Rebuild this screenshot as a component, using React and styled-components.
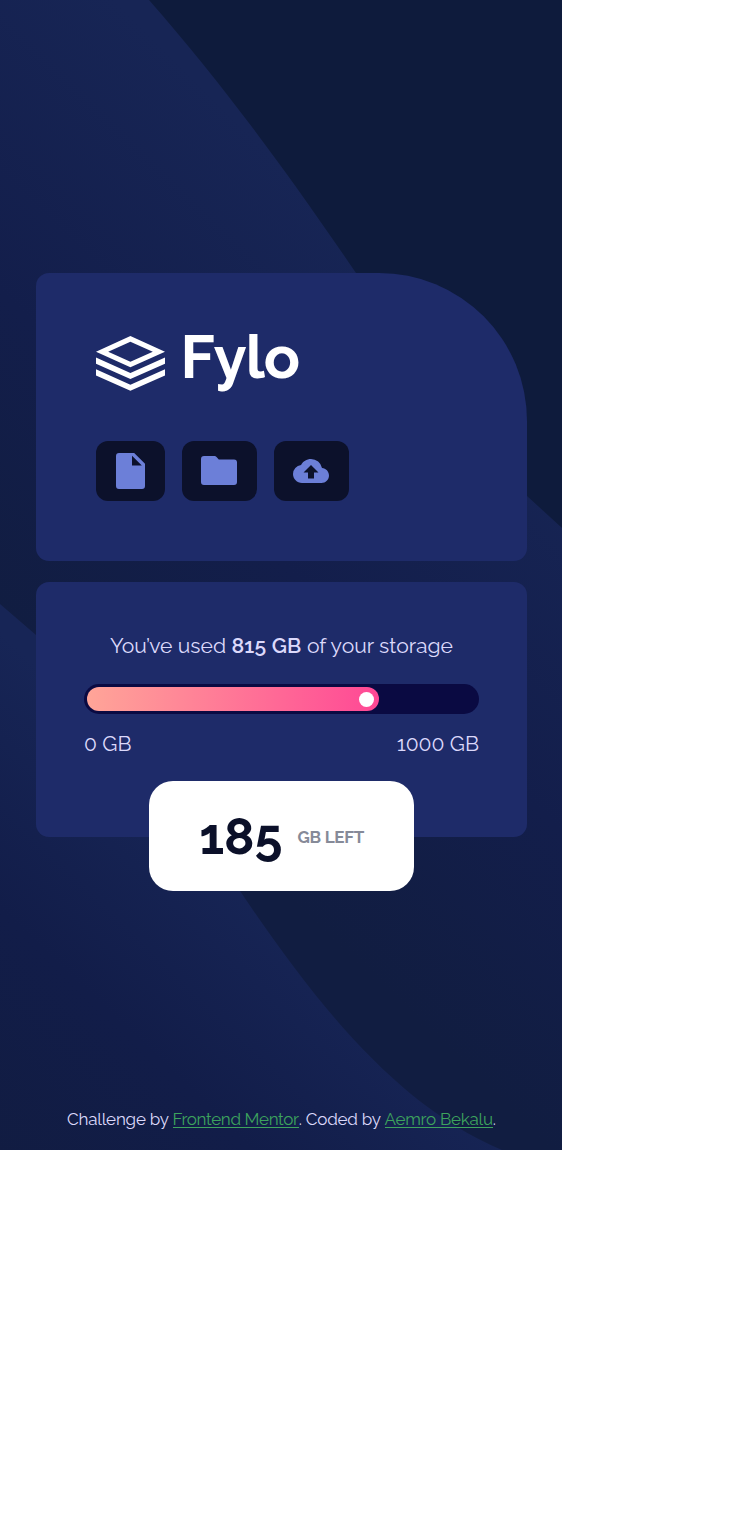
import React from "react";
import styled, { createGlobalStyle } from "styled-components";

const GlobalStyle = createGlobalStyle`
  *, *::before, *::after { box-sizing: border-box; }
  body {
    margin: 0;
    background: #fff;
    font-family: Raleway, Lato, sans-serif;
  }
  p { margin: 0; }
`;

const Page = styled.div`
  position: relative;
  width: 562px;
  height: 1150px;
  padding: 273px 35px 0 36px;
  display: flex;
  flex-direction: column;
  overflow: hidden;
  background: #0e1b3c;
`;

const Backdrop = styled.svg`
  position: absolute;
  inset: 0;
  width: 100%;
  height: 100%;
`;

const Main = styled.main`
  position: relative;
  display: flex;
  flex-direction: column;
  gap: 21px;
`;

const BrandCard = styled.section`
  height: 288px;
  padding: 60px;
  display: flex;
  flex-direction: column;
  justify-content: space-between;
  background: #1e2b69;
  border-radius: 13px 148px 13px 13px;
`;

const LogoSvg = styled.svg`
  display: block;
  width: 220px;
  height: 72px;
  fill: #fff;
  overflow: visible;
`;

const LogoText = styled.text`
  font: 700 60px Raleway, Lato, sans-serif;
  letter-spacing: -0.9px;
`;

const Actions = styled.div`
  display: flex;
  gap: 17px;
`;

const ActionButton = styled.button`
  width: ${(p) => p.$width}px;
  height: 60px;
  padding: ${(p) => p.$inset};
  border: 0;
  border-radius: 12px;
  display: flex;
  align-items: flex-start;
  justify-content: flex-start;
  background: #0c112b;
  color: #6c7fd8;

  svg {
    display: block;
    fill: currentColor;
  }
`;

const StorageCard = styled.section`
  position: relative;
  height: 255px;
  padding: 50px 48px 0;
  background: #1e2b69;
  border-radius: 13px;
  color: #dcd9fb;
  font-size: 21.12px;
  line-height: 28px;
`;

const Usage = styled.p`
  text-align: center;
  white-space: nowrap;

  b {
    font-weight: 650;
    letter-spacing: 0.2px;
  }
`;

const Track = styled.div`
  height: 30px;
  margin: 24px 0 16px;
  padding: 3px;
  border-radius: 15px;
  background: #0a0a42;
`;

const Fill = styled.div`
  height: 24px;
  padding: 1px 5px 0 0;
  border-radius: 12px;
  display: flex;
  align-items: center;
  justify-content: flex-end;
  background: linear-gradient(90deg, #ffa598, #ff4895);
`;

const Knob = styled.span`
  width: 15px;
  height: 15px;
  border-radius: 50%;
  background: #fff;
`;

const Scale = styled.div`
  display: flex;
  justify-content: space-between;
`;

const Remaining = styled.div`
  position: absolute;
  left: 113px;
  bottom: -54px;
  width: 265px;
  height: 110px;
  border-radius: 24px;
  display: flex;
  align-items: center;
  justify-content: center;
  gap: 15px;
  background: #fff;
`;

const Amount = styled.span`
  padding-top: 2px;
  color: #0b1029;
  font-size: 50.5px;
  font-weight: 700;
`;

const Unit = styled.span`
  padding-top: 2px;
  color: #868a98;
  font-size: 17px;
  font-weight: 700;
  letter-spacing: -0.3px;
`;

const Footer = styled.footer`
  position: relative;
  margin-top: 271px;
  display: flex;
  justify-content: center;
  color: #dcd9fb;
  font-size: 17px;
  line-height: 22px;
  white-space: pre;
`;

const Phrase = styled.span`
  letter-spacing: ${(p) => p.$tracking || 0}px;
`;

const FooterLink = styled.a`
  height: 20px;
  color: #3da35d;
  border-bottom: 1px solid currentColor;
  text-decoration: none;
  letter-spacing: ${(p) => p.$tracking || 0}px;
`;

function Waves() {
  return (
    <Backdrop viewBox="0 0 562 1150" aria-hidden="true">
      <defs>
        <linearGradient id="upper" gradientUnits="userSpaceOnUse" x1="270" y1="150" x2="-95" y2="530">
          <stop offset="0" stopColor="#172555" />
          <stop offset="0.55" stopColor="#131e4b" />
          <stop offset="1" stopColor="#111d41" />
        </linearGradient>
        <linearGradient id="lower" gradientUnits="userSpaceOnUse" x1="250" y1="870" x2="-28" y2="1160">
          <stop offset="0" stopColor="#172556" />
          <stop offset="0.5" stopColor="#121d49" />
          <stop offset="1" stopColor="#111c41" />
        </linearGradient>
      </defs>
      <path
        fill="url(#upper)"
        d="M0 0H149C218 79 279 160 356 273C413 357 464 441 527 496L562 528V1150H0Z"
      />
      <path
        fill="url(#lower)"
        d="M0 604L36 635C110 700 175 783 240 891C320 1010 400 1107 502 1150H0Z"
      />
    </Backdrop>
  );
}

function Logo() {
  return (
    <LogoSvg viewBox="0 0 220 72" role="img" aria-label="Fylo">
      <path
        fillRule="evenodd"
        d="M34.4 3L69 18.7L34.4 34.2L0 18.7ZM34.4 8.7L12.2 18.8L34.4 28.8L56.8 18.8Z"
      />
      <path d="M0 24.5L34.4 40L69 24.5V30.7L34.4 46L0 30.7Z" />
      <path d="M0 36.3L34.4 51.8L69 36.3V42.4L34.4 57.8L0 42.4Z" />
      <LogoText x="84.5" y="45">Fylo</LogoText>
    </LogoSvg>
  );
}

export default function App() {
  return (
    <>
      <GlobalStyle />
      <Page>
        <Waves />
        <Main>
          <BrandCard>
            <Logo />
            <Actions>
              <ActionButton $width={69} $inset="12px 20px" aria-label="File">
                <svg width="29" height="36" viewBox="0 0 29 36">
                  <path
                    fillRule="evenodd"
                    d="M3 0H18.2L29 10.8V33a3 3 0 0 1-3 3H3a3 3 0 0 1-3-3V3a3 3 0 0 1 3-3ZM16 2.7V12.4H25.8Z"
                  />
                </svg>
              </ActionButton>
              <ActionButton $width={75} $inset="15px 19px" aria-label="Folder">
                <svg width="36" height="29" viewBox="0 0 36 29">
                  <path d="M3 0H13.5Q14.7 0 15.5 1L17.8 3.4H33a3 3 0 0 1 3 3V26a3 3 0 0 1-3 3H3a3 3 0 0 1-3-3V3a3 3 0 0 1 3-3Z" />
                </svg>
              </ActionButton>
              <ActionButton $width={75} $inset="18px 19px" aria-label="Upload">
                <svg width="36" height="24" viewBox="0 0 24 16">
                  <path d="M19.35 6.04A7.49 7.49 0 0 0 12 0C9.11 0 6.6 1.64 5.35 4.04A5.994 5.994 0 0 0 0 10c0 3.31 2.69 6 6 6h13c2.76 0 5-2.24 5-5 0-2.64-2.05-4.78-4.65-4.96zM14 9v4h-4V9H7l5-5 5 5h-3z" />
                </svg>
              </ActionButton>
            </Actions>
          </BrandCard>
          <StorageCard>
            <Usage>
              You’ve used <b>815 GB</b> of your storage
            </Usage>
            <Track>
              <Fill style={{ width: "75%" }}>
                <Knob />
              </Fill>
            </Track>
            <Scale>
              <span>0 GB</span>
              <span>1000 GB</span>
            </Scale>
            <Remaining>
              <Amount>185</Amount>
              <Unit>GB LEFT</Unit>
            </Remaining>
          </StorageCard>
        </Main>
        <Footer>
          <Phrase $tracking={-0.2}>Challenge by </Phrase>
          <FooterLink href="#" $tracking={-0.36}>Frontend Mentor</FooterLink>
          <Phrase $tracking={-0.2}>. Coded by </Phrase>
          <FooterLink href="#" $tracking={-0.25}>Aemro Bekalu</FooterLink>
          <Phrase>.</Phrase>
        </Footer>
      </Page>
    </>
  );
}
